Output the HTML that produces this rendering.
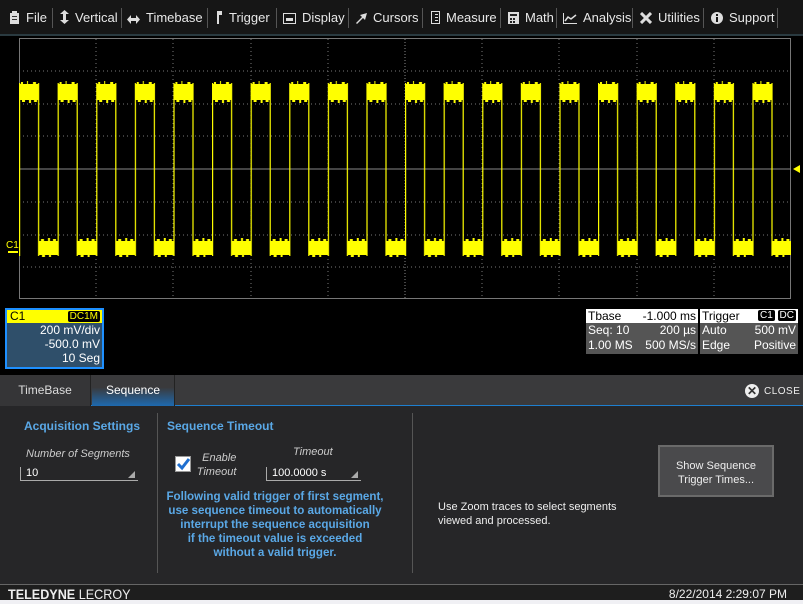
<!DOCTYPE html>
<html><head><meta charset="utf-8">
<style>
*{margin:0;padding:0;box-sizing:border-box}
body{width:803px;height:603px;background:#000;font-family:"Liberation Sans",Arial,sans-serif;position:relative;overflow:hidden;color:#fff}
#menu{position:absolute;left:0;top:0;width:803px;height:36px;background:#161616;border-bottom:2px solid #2a3a40}
.mi{position:absolute;top:10px;font-size:13px;color:#e8e8e8;white-space:nowrap}
.sep{position:absolute;top:8px;width:1px;height:20px;background:#555}
.ic{display:inline-block;vertical-align:-2px;margin-right:6px}
#scope{position:absolute;left:0;top:38px;width:803px;height:270px;background:#000}
.box{position:absolute;font-size:12px}
#panel{position:absolute;left:0;top:375px;width:803px;height:210px;background:#262628}
#tabs{position:absolute;left:0;top:0;width:803px;height:31px;background:#3a3a3c;border-bottom:1px solid #1e7fd0}
.tab{position:absolute;top:0;height:31px;font-size:12px;line-height:31px;text-align:center;color:#ddd}
.h{position:absolute;font-size:12px;font-weight:bold;color:#5aa8e6}
.lbl{position:absolute;font-size:11px;font-style:italic;color:#ccc}
.fld{position:absolute;font-size:11px;color:#fff;border-left:1px solid #aaa;border-bottom:1px solid #aaa;height:14px;padding-left:5px}
.fld:after{content:"";position:absolute;right:3px;bottom:2px;border-left:7px solid transparent;border-bottom:7px solid #aaa}
#foot{position:absolute;left:0;top:584px;width:803px;height:19px;background:#1e1e1e;border-top:1px solid #666}
</style></head><body>
<div id="menu">
 <div class="mi" style="left:9px"><svg class="ic" width="11" height="13"><rect x="1" y="2" width="9" height="11" fill="#ddd"/><rect x="3" y="0" width="5" height="3" fill="#ddd"/><rect x="3" y="5" width="5" height="1" fill="#333"/><rect x="3" y="8" width="5" height="1" fill="#333"/></svg>File</div>
 <div class="sep" style="left:52px"></div>
 <div class="mi" style="left:60px"><svg class="ic" width="9" height="14"><path d="M4.5 0 L9 4 H6 V10 H9 L4.5 14 L0 10 H3 V4 H0Z" fill="#ddd"/></svg>Vertical</div>
 <div class="sep" style="left:121px"></div>
 <div class="mi" style="left:127px"><svg class="ic" width="13" height="9"><path d="M0 4.5 L4 0 V3 H9 V0 L13 4.5 L9 9 V6 H4 V9Z" fill="#ddd"/></svg>Timebase</div>
 <div class="sep" style="left:207px"></div>
 <div class="mi" style="left:217px"><svg class="ic" width="6" height="13"><rect x="0" y="0" width="2" height="13" fill="#ddd"/><rect x="2" y="0" width="3" height="4" fill="#ddd"/></svg>Trigger</div>
 <div class="sep" style="left:276px"></div>
 <div class="mi" style="left:283px"><svg class="ic" width="13" height="11"><rect x="0.5" y="0.5" width="12" height="10" fill="none" stroke="#ddd"/><rect x="3" y="5" width="7" height="3" fill="#ddd"/></svg>Display</div>
 <div class="sep" style="left:348px"></div>
 <div class="mi" style="left:356px"><svg class="ic" width="11" height="11"><path d="M11 0 L4 2 L6 4 L0 10 L1 11 L7 5 L9 7Z" fill="#ddd"/></svg>Cursors</div>
 <div class="sep" style="left:422px"></div>
 <div class="mi" style="left:431px"><svg class="ic" width="9" height="13"><rect x="0.5" y="0.5" width="8" height="12" fill="none" stroke="#ddd"/><rect x="4" y="3" width="3" height="1" fill="#ddd"/><rect x="4" y="6" width="3" height="1" fill="#ddd"/><rect x="4" y="9" width="3" height="1" fill="#ddd"/></svg>Measure</div>
 <div class="sep" style="left:500px"></div>
 <div class="mi" style="left:508px"><svg class="ic" width="11" height="12"><rect x="0" y="0" width="11" height="12" fill="#ddd"/><rect x="2" y="2" width="7" height="2" fill="#222"/><rect x="2" y="6" width="2" height="2" fill="#222"/><rect x="5" y="6" width="2" height="2" fill="#222"/><rect x="2" y="9" width="2" height="2" fill="#222"/><rect x="5" y="9" width="2" height="2" fill="#222"/></svg>Math</div>
 <div class="sep" style="left:556px"></div>
 <div class="mi" style="left:563px"><svg class="ic" width="14" height="11"><path d="M0.5 0 V10.5 H14" stroke="#ddd" fill="none"/><path d="M2 8 L5 4 L8 6 L13 2" stroke="#ddd" fill="none" stroke-width="1.5"/></svg>Analysis</div>
 <div class="sep" style="left:632px"></div>
 <div class="mi" style="left:640px"><svg class="ic" width="12" height="12"><path d="M1 1 L11 11 M11 1 L1 11" stroke="#ddd" stroke-width="3"/></svg>Utilities</div>
 <div class="sep" style="left:703px"></div>
 <div class="mi" style="left:711px"><svg class="ic" width="12" height="12"><circle cx="6" cy="6" r="6" fill="#ddd"/><rect x="5" y="5" width="2" height="5" fill="#161616"/><rect x="5" y="2" width="2" height="2" fill="#161616"/></svg>Support</div>
 <div class="sep" style="left:777px"></div>
</div>
<div id="scope">
<svg width="803" height="270" style="position:absolute;left:0;top:0">
 <defs>
  <pattern id="w" x="19" y="0" width="38.6" height="270" patternUnits="userSpaceOnUse">
   <rect x="0" y="46" width="19.6" height="16" fill="#ffff00"/>
   <rect x="19.6" y="203" width="19" height="14" fill="#ffff00"/>
   <rect x="0" y="45" width="1.2" height="173" fill="#ffff00"/>
   <rect x="19" y="45" width="1.2" height="173" fill="#ffff00"/>
   <rect x="2" y="44" width="2" height="2" fill="#ffff00"/><rect x="8" y="43" width="1" height="3" fill="#ffff00"/><rect x="14" y="44" width="3" height="2" fill="#ffff00"/>
   <rect x="3" y="62" width="3" height="2" fill="#ffff00"/><rect x="10" y="62" width="2" height="3" fill="#ffff00"/><rect x="15" y="62" width="3" height="2" fill="#ffff00"/>
   <rect x="22" y="201" width="3" height="2" fill="#ffff00"/><rect x="29" y="200" width="2" height="3" fill="#ffff00"/><rect x="34" y="201" width="3" height="2" fill="#ffff00"/>
   <rect x="23" y="217" width="3" height="2" fill="#ffff00"/><rect x="30" y="217" width="2" height="2" fill="#ffff00"/>
  </pattern>
 </defs>
 <g stroke="#777" stroke-dasharray="1,3" stroke-width="1">
  <line x1="19" y1="33" x2="791" y2="33"/><line x1="19" y1="66" x2="791" y2="66"/><line x1="19" y1="98" x2="791" y2="98"/>
  <line x1="19" y1="164" x2="791" y2="164"/><line x1="19" y1="197" x2="791" y2="197"/><line x1="19" y1="229" x2="791" y2="229"/>
  <line x1="96" y1="1" x2="96" y2="260"/><line x1="173" y1="1" x2="173" y2="260"/><line x1="251" y1="1" x2="251" y2="260"/><line x1="328" y1="1" x2="328" y2="260"/>
  <line x1="482" y1="1" x2="482" y2="260"/><line x1="559" y1="1" x2="559" y2="260"/><line x1="637" y1="1" x2="637" y2="260"/><line x1="714" y1="1" x2="714" y2="260"/>
 </g>
 <rect x="19.5" y="0.5" width="771" height="260" fill="none" stroke="#777"/>
 <line x1="19" y1="131" x2="791" y2="131" stroke="#888"/>
 <line x1="405" y1="1" x2="405" y2="260" stroke="#888" stroke-dasharray="1,2"/>
 <rect x="19" y="0" width="772" height="260" fill="url(#w)"/>
 <polygon points="793,131 800,127 800,135" fill="#ffff00"/>
 <text x="6" y="210" font-size="10" fill="#ffff00" font-family="Liberation Sans">C1</text>
 <rect x="8" y="213" width="10" height="2" fill="#ffff00"/>
</svg>
</div>
<div class="box" style="left:5px;top:308px;width:99px;height:61px;border:2px solid #1e90ff;background:#2f4f6a">
 <div style="background:#ffff00;color:#000;height:13px;line-height:13px;padding-left:3px;position:relative">C1<span style="position:absolute;right:2px;top:1px;background:#000;color:#ffff00;font-size:10px;line-height:11px;padding:0 2px;border-radius:2px">DC1M</span></div>
 <div style="text-align:right;padding-right:2px;line-height:14px">200 mV/div<br>-500.0 mV<br>10 Seg</div>
</div>
<div class="box" style="left:586px;top:309px;width:112px;height:45px;background:#555">
 <div style="background:#fff;color:#000;height:14px;line-height:14px;padding:0 2px;display:flex;justify-content:space-between"><span>Tbase</span><span>-1.000 ms</span></div>
 <div style="line-height:15px;padding:0 2px;display:flex;justify-content:space-between"><span>Seq: 10</span><span>200 µs</span></div>
 <div style="line-height:14px;padding:0 2px;display:flex;justify-content:space-between"><span>1.00 MS</span><span>500 MS/s</span></div>
</div>
<div class="box" style="left:700px;top:309px;width:98px;height:45px;background:#555">
 <div style="background:#fff;color:#000;height:14px;line-height:14px;padding:0 2px;display:flex;justify-content:space-between"><span>Trigger</span><span style="font-size:10px"><b style="background:#000;color:#fff;padding:0 2px;border-radius:2px;font-weight:normal">C1</b> <b style="background:#000;color:#fff;padding:0 2px;border-radius:2px;font-weight:normal">DC</b></span></div>
 <div style="line-height:15px;padding:0 2px;display:flex;justify-content:space-between"><span>Auto</span><span>500 mV</span></div>
 <div style="line-height:14px;padding:0 2px;display:flex;justify-content:space-between"><span>Edge</span><span>Positive</span></div>
</div>
<div id="panel">
 <div id="tabs">
  <div class="tab" style="left:0;width:91px;background:#353537;border-right:1px solid #222">TimeBase</div>
  <div class="tab" style="left:92px;width:83px;background:linear-gradient(#3a3a3c 40%,#1e6ab0);color:#fff;border-right:1px solid #222">Sequence</div>
  <div style="position:absolute;left:745px;top:9px;width:14px;height:14px;border-radius:7px;background:#eee;color:#333;font-size:12px;line-height:14px;text-align:center;font-weight:bold">✕</div>
  <div style="position:absolute;left:764px;top:11px;font-size:10px;letter-spacing:0.5px;color:#eee">CLOSE</div>
 </div>
 <div style="position:absolute;left:157px;top:38px;width:1px;height:160px;background:#555"></div>
 <div style="position:absolute;left:412px;top:38px;width:1px;height:160px;background:#555"></div>
 <div class="h" style="left:24px;top:44px">Acquisition Settings</div>
 <div class="lbl" style="left:26px;top:73px">Number of Segments</div>
 <div class="fld" style="left:20px;top:92px;width:118px">10</div>
 <div class="h" style="left:167px;top:44px">Sequence Timeout</div>
 <div style="position:absolute;left:175px;top:81px;width:16px;height:16px;background:#fff;border:1px solid #999"><svg width="14" height="14"><path d="M2 7 L6 11 L13 2" stroke="#1e6fd0" stroke-width="3" fill="none"/></svg></div>
 <div class="lbl" style="left:196px;top:76px;text-align:right;line-height:14px">&nbsp;&nbsp;Enable<br>Timeout</div>
 <div class="lbl" style="left:293px;top:71px">Timeout</div>
 <div class="fld" style="left:266px;top:92px;width:95px">100.0000 s</div>
 <div style="position:absolute;left:154px;top:115px;width:242px;text-align:center;font-size:11.6px;font-weight:bold;color:#5aa8e6;line-height:14px">Following valid trigger of first segment,<br>use sequence timeout to automatically<br>interrupt the sequence acquisition<br>if the timeout value is exceeded<br>without a valid trigger.</div>
 <div style="position:absolute;left:438px;top:125px;font-size:11px;color:#eee;line-height:14px">Use Zoom traces to select segments<br>viewed and processed.</div>
 <div style="position:absolute;left:658px;top:70px;width:116px;height:52px;background:#4a4a4c;border:2px solid #6a6a6a;font-size:11px;color:#eee;text-align:center;line-height:14px;padding-top:12px">Show Sequence<br>Trigger Times...</div>
</div>
<div id="foot">
 <div style="position:absolute;left:8px;top:1px;font-size:14px;color:#eee;transform:scaleX(0.9);transform-origin:left"><b>TELEDYNE</b> LECROY</div>
 <div style="position:absolute;right:16px;top:2px;font-size:12px;color:#eee">8/22/2014 2:29:07 PM</div>
 <div style="position:absolute;left:0;top:15px;width:803px;height:4px;background:#f0f0f4"></div>
</div>
</body></html>
